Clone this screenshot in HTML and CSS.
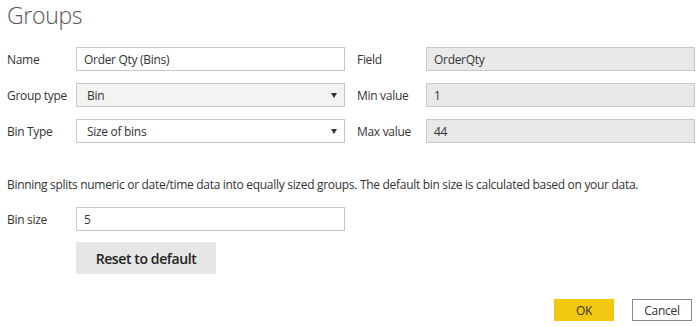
FILE: index.html
```html
<!DOCTYPE html>
<html lang="en">
<head>
    <meta charset="UTF-8">
    <meta name="viewport" content="width=device-width, initial-scale=1.0">
    <title>Groups</title>
    <link rel="stylesheet" href="styles.css">
</head>
<body>

    <div class="dialog">
        <h1>Groups</h1>

        <div class="form-grid">
            <div class="column">
                <label for="name">Name</label>
                <input type="text" id="name" class="field" value="Order Qty (Bins)">

                <label for="groupType">Group type</label>
                <div class="select-wrap">
                    <select id="groupType" class="field select grey">
                        <option>Bin</option>
                        <option>List</option>
                    </select>
                </div>

                <label for="binType">Bin Type</label>
                <div class="select-wrap">
                    <select id="binType" class="field select">
                        <option>Size of bins</option>
                        <option>Number of bins</option>
                    </select>
                </div>
            </div>

            <div class="column">
                <label for="field">Field</label>
                <input type="text" id="field" class="field readonly" value="OrderQty" readonly>

                <label for="minValue">Min value</label>
                <input type="text" id="minValue" class="field readonly" value="1" readonly>

                <label for="maxValue">Max value</label>
                <input type="text" id="maxValue" class="field readonly" value="44" readonly>
            </div>
        </div>

        <p class="hint">Binning splits numeric or date/time data into equally sized groups. The default bin size is calculated based on your data.</p>

        <div class="column">
            <label for="binSize">Bin size</label>
            <input type="text" id="binSize" class="field" value="5">
        </div>

        <button class="btn-reset">Reset to default</button>

        <div class="actions">
            <button class="btn btn-ok">OK</button>
            <button class="btn btn-cancel">Cancel</button>
        </div>
    </div>

</body>
</html>
```

FILE: styles.css
```css
body {
    margin: 0;
    font-family: "Open Sans", "Noto Sans", sans-serif;
    font-size: 12px;
    letter-spacing: -0.3px;
    color: #333;
    background: white;
}
.dialog {
    padding: 0 2px 0 7px;
}
h1 {
    margin: 0;
    height: 47px;
    font-size: 23px;
    font-weight: 300;
    line-height: 30px;
    letter-spacing: -0.3px;
    color: #555;
}
.form-grid {
    display: flex;
    gap: 12px;
}
.column {
    display: grid;
    grid-template-columns: 69px 269px;
    row-gap: 12px;
    align-items: center;
}
label {
    color: #333;
}
.field {
    box-sizing: border-box;
    width: 100%;
    height: 24px;
    margin: 0;
    padding: 0 7px;
    border: 1px solid #c8c8c8;
    border-radius: 0;
    background: white;
    font-family: inherit;
    font-size: 12px;
    letter-spacing: -0.3px;
    color: #333;
    outline: none;
}
.readonly {
    background: #e9e9e9;
}
.select-wrap {
    position: relative;
}
.select {
    appearance: none;
    -webkit-appearance: none;
    padding-left: 10px;
}
.grey {
    background: #f3f3f3;
}
.select-wrap::after {
    content: "";
    position: absolute;
    right: 8px;
    top: 10px;
    border-left: 3px solid transparent;
    border-right: 3px solid transparent;
    border-top: 5px solid #333;
    pointer-events: none;
}
.hint {
    margin: 34px 0 14px;
    line-height: 16px;
}
.btn-reset {
    display: block;
    margin: 11px 0 0 69px;
    width: 140px;
    height: 32px;
    border: none;
    background: #e6e6e6;
    font-family: inherit;
    font-size: 14px;
    font-weight: 600;
    letter-spacing: -0.4px;
    color: #222;
}
.actions {
    display: flex;
    justify-content: flex-end;
    gap: 18px;
    margin: 25px 3px 0 0;
}
.btn {
    box-sizing: border-box;
    width: 60px;
    height: 22px;
    padding: 0;
    font-family: inherit;
    font-size: 12px;
    letter-spacing: -0.3px;
    color: #333;
    cursor: pointer;
}
.btn-ok {
    border: none;
    background: #f2c811;
}
.btn-cancel {
    border: 1px solid #8a8a8a;
    background: white;
}
```
